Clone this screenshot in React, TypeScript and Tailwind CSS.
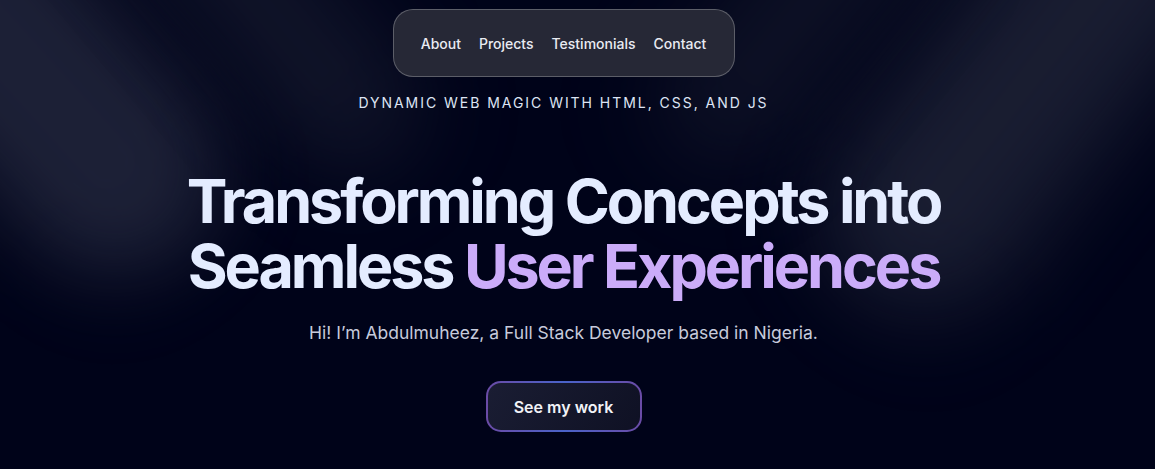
export default function App() {
  return (
    <div
      className="relative h-[469px] w-full overflow-hidden bg-[#000319] text-white"
      style={{ fontFamily: "Inter, 'Liberation Sans', sans-serif" }}
    >
      {/* Spotlights */}
      <div className="pointer-events-none absolute -left-[80px] -top-[170px] h-[480px] w-[210px] rotate-[-42deg] rounded-full bg-[#20243a] opacity-90 blur-[40px]" />
      <div className="pointer-events-none absolute left-[190px] -top-[230px] h-[440px] w-[130px] rotate-[-40deg] rounded-full bg-[#181c30] opacity-70 blur-[45px]" />
      <div className="pointer-events-none absolute right-[20px] -top-[210px] h-[560px] w-[200px] rotate-[38deg] rounded-full bg-[#1c2034] opacity-90 blur-[45px]" />
      <div className="pointer-events-none absolute right-[280px] -top-[200px] h-[400px] w-[130px] rotate-[40deg] rounded-full bg-[#171b2e] opacity-60 blur-[45px]" />

      <div className="relative flex w-[1127px] flex-col items-center">
        {/* Nav */}
        <nav className="mt-[9px] flex h-[68px] w-[342px] items-center justify-center gap-[18px] rounded-[20px] border border-white/25 bg-[#262836] text-[14px] font-medium text-[#e9ebf2]">
          <a href="#about">About</a>
          <a href="#projects">Projects</a>
          <a href="#testimonials">Testimonials</a>
          <a href="#contact">Contact</a>
        </nav>

        <p className="mt-[15px] text-[14px] font-normal uppercase tracking-[0.14em] text-[#dde4f4]">
          Dynamic Web Magic with HTML, CSS, and JS
        </p>

        <h1 className="mt-[56px] text-center text-[61px] font-bold leading-[65px] tracking-[-0.05em] text-[#e4ecff]">
          Transforming Concepts into
          <br />
          Seamless <span className="text-[#cbacf9]">User Experiences</span>
        </h1>

        <p className="mt-[21px] text-[17.5px] text-[#c7cbdc]">
          Hi! I’m Abdulmuheez, a Full Stack Developer based in Nigeria.
        </p>

        <button className="mt-[35px] rounded-[15px] bg-[linear-gradient(90deg,#6a4ba6,#4a63c9,#6a4ba6)] p-[2px]">
          <span className="flex h-[47px] w-[152px] items-center justify-center rounded-[13px] bg-[linear-gradient(120deg,#1a1d33,#0f1124)] text-[16px] font-semibold text-[#f1f2f7]">
            See my work
          </span>
        </button>
      </div>
    </div>
  )
}
